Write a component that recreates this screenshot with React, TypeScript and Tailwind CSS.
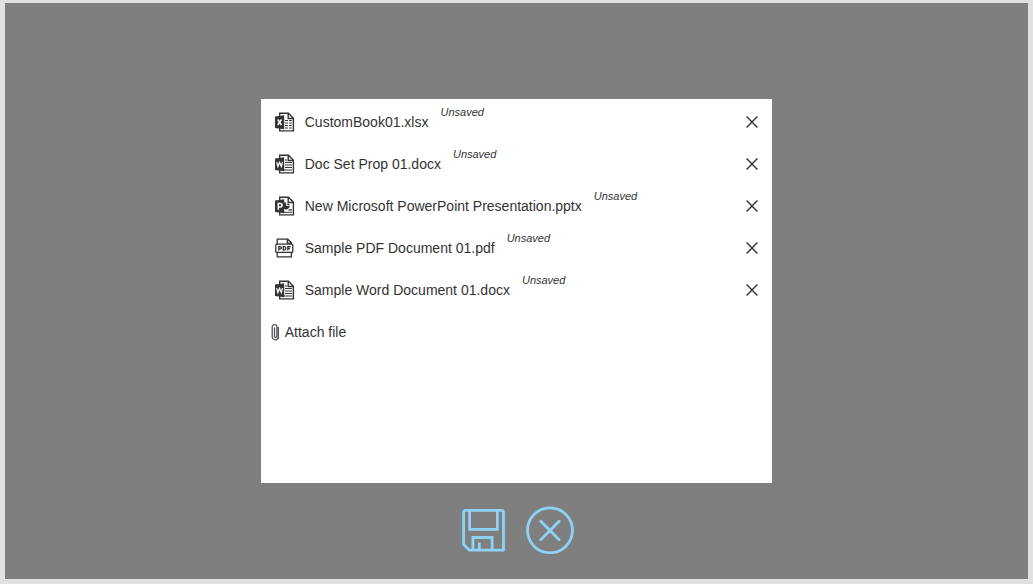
import React, { useState } from "react";

type Kind = "excel" | "word" | "powerpoint" | "pdf";

interface Attachment {
  name: string;
  kind: Kind;
}

const initialFiles: Attachment[] = [
  { name: "CustomBook01.xlsx", kind: "excel" },
  { name: "Doc Set Prop 01.docx", kind: "word" },
  { name: "New Microsoft PowerPoint Presentation.pptx", kind: "powerpoint" },
  { name: "Sample PDF Document 01.pdf", kind: "pdf" },
  { name: "Sample Word Document 01.docx", kind: "word" },
];

function FileIcon({ kind }: { kind: Kind }) {
  if (kind === "pdf") {
    return (
      <svg aria-hidden="true" viewBox="0 0 20 20" className="size-5 shrink-0" fill="none" stroke="#333" strokeWidth="1.3">
        <path d="M2.2 6V1.2h10.600l3.600 3.600V6M12.300 1.500v3.600h3.600M2.200 14.500v4.300h14.200v-4.300" />
        <rect x="0.800" y="6.200" width="17" height="8.200" rx="1" />
        <path d="M3.800 12.600V8.600h1.400q1.200 0 1.200 1.100T5.200 10.800H3.800M8.300 8.600v3.500h.9q1.600 0 1.600-1.800T9.200 8.600zM12.800 12.600V8.600h2.900M12.800 10.500h2.300" />
      </svg>
    );
  }
  return (
    <svg aria-hidden="true" viewBox="0 0 20 20" className="size-5 shrink-0" fill="none" stroke="#333" strokeWidth="1.4">
      <path d="M4.700 4V1.300h8.800l4.900 4.900v12.700H4.700V15.500M13.200 1.500v5h5" />
      <path d="M0 4.500l9.200-1.200v13.900L0 16z" fill="#333" stroke="none" />
      {kind === "excel" && (
        <>
          <path d="M2.700 7.500l3.800 5.500M6.500 7.500l-3.800 5.500" stroke="#fff" strokeWidth="1.500" />
          <path d="M10 8.500h3M14 8.500h2.800M10 11h3M14 11h2.800M10 13.500h3M14 13.500h2.800M10 16h3M14 16h2.800" strokeWidth="1.200" />
        </>
      )}
      {kind === "word" && (
        <>
          <path d="M1.700 8l1.200 4.500 1.700-4.200 1.700 4.200 1.200-4.500" stroke="#fff" strokeWidth="1.200" />
          <path d="M10 6h2M10 8.500h7M10 11h7M10 13.500h7M8 16h9" strokeWidth="1.100" />
        </>
      )}
      {kind === "powerpoint" && (
        <>
          <path d="M3.300 13.700V7.500h1.800q2 0 2 1.700t-2 1.700H3.300" stroke="#fff" strokeWidth="1.500" />
          <path d="M9 6.500h2.200v3.400h3.600a4 4 0 0 1-5.800 3.200z" fill="#333" stroke="none" />
          <path d="M12.300 7.500q2.500 0 2.700 1.700h-2.700z" fill="#333" stroke="none" />
          <path d="M8 16.200h9M13.500 13.900H17" strokeWidth="1.100" />
        </>
      )}
    </svg>
  );
}

export default function App() {
  const [files, setFiles] = useState(initialFiles);

  return (
    <div className="flex min-h-screen flex-col bg-[#e1e1e1] px-[5px] pt-[3px] pb-[5px] font-['Liberation_Sans',Arial,sans-serif] text-[#333]">
      <main className="flex grow flex-col items-center bg-[#7f7f7f] pt-24">
        <section aria-label="Attachments" className="min-h-96 w-1/2 bg-white pt-0.5">
          <ul>
            {files.map((file) => (
              <li key={file.name} className="flex h-[42px] items-center pr-3 pl-3.5">
                <FileIcon kind={file.kind} />
                <span className="ml-2.5 text-[14px] leading-5">{file.name}</span>
                <em className="mb-5 ml-3 text-[11px] leading-4">Unsaved</em>
                <button
                  type="button"
                  aria-label={"Remove " + file.name}
                  onClick={() => setFiles(files.filter((f) => f !== file))}
                  className="ml-auto flex size-4 cursor-pointer items-center justify-center"
                >
                  <svg aria-hidden="true" viewBox="0 0 12 12" className="size-3" fill="none" stroke="#333" strokeWidth="1.4">
                    <path d="M.6.6l10.800 10.800M11.400.6L.6 11.400" />
                  </svg>
                </button>
              </li>
            ))}
          </ul>
          <button type="button" className="flex h-[42px] cursor-pointer items-center gap-1 pl-2.5">
            <svg aria-hidden="true" viewBox="0 0 10 18" className="h-[18px] w-2.5" fill="none" stroke="#555" strokeWidth="1.300" strokeLinecap="round">
              <path d="M7.400 4.500v9.200a3.100 3.100 0 0 1-6.200 0V3.600a2.400 2.400 0 0 1 4.700 0v9.600a1.200 1.200 0 0 1-2.400 0V5" />
            </svg>
            <span className="text-[14px] leading-5">Attach file</span>
          </button>
        </section>
        <div className="flex items-center gap-5 pt-[23px] pb-[22px] pl-[3px] text-[#8ed3f5]">
          <button type="button" aria-label="Save" className="cursor-pointer">
            <svg aria-hidden="true" viewBox="0 0 44 44" className="size-11" fill="none" stroke="currentColor" strokeWidth="2.800">
              <path d="M3.500 2.400h36q2 0 2 2v37.800H7.500L1.600 36.500V4.400q0-2 1.900-2z" strokeLinejoin="round" />
              <path d="M7.600 2.400v18.900h27.800V2.400M10.900 42V29.500h19.200V42M17.300 34.500V42" />
            </svg>
          </button>
          <button type="button" aria-label="Cancel" className="cursor-pointer">
            <svg aria-hidden="true" viewBox="0 0 48 48" className="size-12" fill="none" stroke="currentColor" strokeWidth="2.800" strokeLinecap="round">
              <circle cx="24" cy="24.300" r="22.500" />
              <path d="M14.800 15.300l18.400 18.400M33.200 15.300l-18.400 18.400" />
            </svg>
          </button>
        </div>
      </main>
    </div>
  );
}
